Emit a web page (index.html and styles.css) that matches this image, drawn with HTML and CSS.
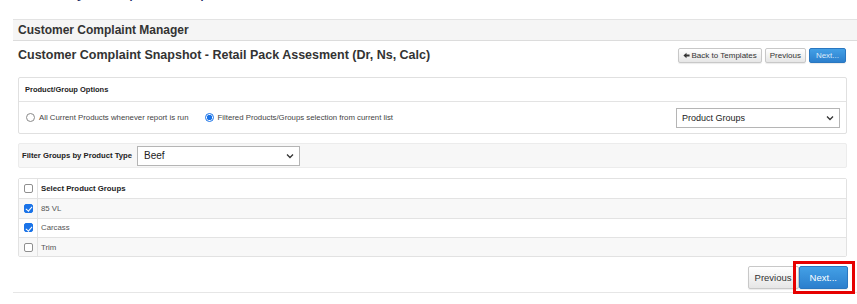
FILE: index.html
```html
<!DOCTYPE html>
<html>
<head>
<meta charset="utf-8">
<link rel="stylesheet" href="styles.css">
</head>
<body>
<div class="top-clip"><span class="top-text">Monthly Complaint Report</span></div>
<div class="page">
  <div class="mgr-head">Customer Complaint Manager</div>
  <div class="content">
    <div class="title-row">
      <h1 class="title">Customer Complaint Snapshot - Retail Pack Assesment (Dr, Ns, Calc)</h1>
      <div class="btns">
        <button class="btn btn-sm"><svg class="arr" width="7" height="7" viewBox="0 0 8 8"><path d="M0.5 4 L4 0.8 L4 2.8 L7.5 2.8 L7.5 5.2 L4 5.2 L4 7.2 Z" fill="#333"/></svg>Back to Templates</button>
        <button class="btn btn-sm">Previous</button>
        <button class="btn btn-sm btn-blue">Next...</button>
      </div>
    </div>

    <div class="panel">
      <div class="panel-head">Product/Group Options</div>
      <div class="panel-body options">
        <label class="radio"><span class="rb"></span>All Current Products whenever report is run</label>
        <label class="radio"><span class="rb on"></span>Filtered Products/Groups selection from current list</label>
        <div class="sel sel-right">Product Groups<svg width="8" height="6" viewBox="0 0 8 6"><path d="M1 1.5 L4 4.5 L7 1.5" stroke="#333" stroke-width="1.3" fill="none"/></svg></div>
      </div>
    </div>

    <div class="filter">
      <span class="flabel">Filter Groups by Product Type</span>
      <div class="sel sel-type">Beef<svg width="8" height="6" viewBox="0 0 8 6"><path d="M1 1.5 L4 4.5 L7 1.5" stroke="#333" stroke-width="1.3" fill="none"/></svg></div>
    </div>

    <div class="table">
      <div class="tr head"><div class="tc"><span class="cb"></span></div><div class="td">Select Product Groups</div></div>
      <div class="tr alt"><div class="tc"><span class="cb on"></span></div><div class="td">85 VL</div></div>
      <div class="tr"><div class="tc"><span class="cb on"></span></div><div class="td">Carcass</div></div>
      <div class="tr alt"><div class="tc"><span class="cb"></span></div><div class="td">Trim</div></div>
    </div>

    <div class="footer">
      <button class="btn btn-lg">Previous</button>
      <div class="hl"><button class="btn btn-lg btn-blue">Next...</button></div>
    </div>
  </div>
  <div class="bottom-line"></div>
</div>
</body>
</html>
```
FILE: styles.css
```css
* { box-sizing: border-box; }
body {
  margin: 0;
  font-family: "Liberation Sans", Arial, sans-serif;
  color: #333;
  background: #fff;
  width: 857px;
  height: 304px;
  overflow: hidden;
}
.top-clip {
  height: 19px;
  overflow: hidden;
  padding-left: 23px;
}
.top-text {
  display: block;
  margin-top: -18px;
  font-size: 18px;
  line-height: 18px;
  color: #1f2f6b;
}
.page {
  margin-left: 13px;
  border-top: 1px solid #e3e3e3;
}
.mgr-head {
  background: #f5f5f5;
  border-bottom: 1px solid #dcdcdc;
  height: 21px;
  padding: 3px 0 0 5px;
  font-size: 12px;
  font-weight: bold;
  color: #333;
}
.content {
  padding: 0 10px 0 5px;
}
.title-row {
  display: flex;
  align-items: center;
  justify-content: space-between;
  height: 26px;
  margin-top: 1px;
}
.title {
  margin: 0;
  font-size: 12.5px;
  font-weight: bold;
  color: #333;
}
.btns {
  display: flex;
  gap: 3px;
  margin-right: 1px;
}
.btn {
  font-family: "Liberation Sans", Arial, sans-serif;
  border: 1px solid #c8c8c8;
  border-radius: 2px;
  background: linear-gradient(#ffffff, #e6e6e6);
  color: #333;
  cursor: pointer;
  padding: 0;
  box-shadow: 0 1px 1px rgba(0,0,0,0.08);
}
.btn-sm {
  height: 15px;
  font-size: 8px;
  padding: 0 4px;
  display: flex;
  align-items: center;
  gap: 2px;
}
.btn-blue {
  background: linear-gradient(#43a0e6, #2c7fcd);
  border-color: #2a77c0;
  color: #fff;
}
.btn-sm.btn-blue { color: #dcebfa; padding: 0 6px; }
.panel {
  margin-top: 9px;
  border: 1px solid #e0e0e0;
  border-radius: 2px;
}
.panel-head {
  height: 24px;
  padding: 7px 0 0 6px;
  font-size: 7.5px;
  font-weight: bold;
  color: #222;
  border-bottom: 1px solid #e3e3e3;
}
.options {
  display: flex;
  align-items: center;
  height: 31px;
  padding: 0 6px 0 7px;
  font-size: 7.8px;
  color: #444;
}
.radio {
  display: flex;
  align-items: center;
  gap: 4px;
  margin-right: 16px;
}
.rb {
  width: 9px;
  height: 9px;
  border: 1px solid #8a8a8a;
  border-radius: 50%;
  background: #fff;
  display: inline-block;
}
.rb.on {
  border-color: #1a73e8;
  background: radial-gradient(circle, #1a73e8 0 2.5px, #fff 3px);
}
.sel {
  display: flex;
  align-items: center;
  justify-content: space-between;
  border: 1px solid #b5b5b5;
  background: #fff;
  font-size: 9px;
  color: #222;
  height: 20px;
  padding: 0 5px;
}
.sel-right {
  margin-left: auto;
  width: 164px;
}
.filter {
  margin-top: 9px;
  height: 25px;
  background: #f7f7f7;
  border: 1px solid #ececec;
  border-radius: 2px;
  display: flex;
  align-items: center;
  padding-left: 3px;
}
.flabel {
  font-size: 7.7px;
  font-weight: bold;
  color: #222;
  margin-right: 5px;
}
.sel-type {
  width: 163px;
  font-size: 10px;
  padding-left: 6px;
}
.table {
  margin-top: 10px;
  border: 1px solid #e2e2e2;
  border-radius: 2px;
}
.tr {
  display: flex;
  height: 19.3px;
  border-top: 1px solid #e3e3e3;
  background: #fff;
}
.tr.head { border-top: none; }
.tr.alt { background: #f8f8f8; }
.tc {
  width: 19px;
  border-right: 1px solid #e3e3e3;
  display: flex;
  align-items: center;
  justify-content: center;
}
.td {
  display: flex;
  align-items: center;
  padding-left: 3px;
  font-size: 7.8px;
  color: #555;
}
.head .td { font-weight: bold; color: #222; }
.cb {
  width: 9px;
  height: 9px;
  border: 1px solid #8f8f8f;
  border-radius: 2px;
  background: #fff;
  display: inline-block;
  position: relative;
}
.cb.on {
  background: #1a73e8;
  border-color: #1a73e8;
}
.cb.on::after {
  content: "";
  position: absolute;
  left: 2.5px;
  top: 0.5px;
  width: 2.5px;
  height: 5px;
  border: solid #fff;
  border-width: 0 1.5px 1.5px 0;
  transform: rotate(40deg);
}
.footer {
  display: flex;
  justify-content: flex-end;
  align-items: center;
  margin-right: -8px;
  margin-top: 4px;
}
.btn-lg {
  height: 23px;
  font-size: 9.5px;
  padding: 0 6px;
}
.btn-lg.btn-blue { padding: 0 10px; }
.hl {
  border: 3px solid #e60000;
  padding: 2px 4px 2px 3px;
  margin-left: -6px;
  position: relative;
}
.bottom-line {
  border-top: 1px solid #e6e6e6;
  margin-top: -2px;
}
```
